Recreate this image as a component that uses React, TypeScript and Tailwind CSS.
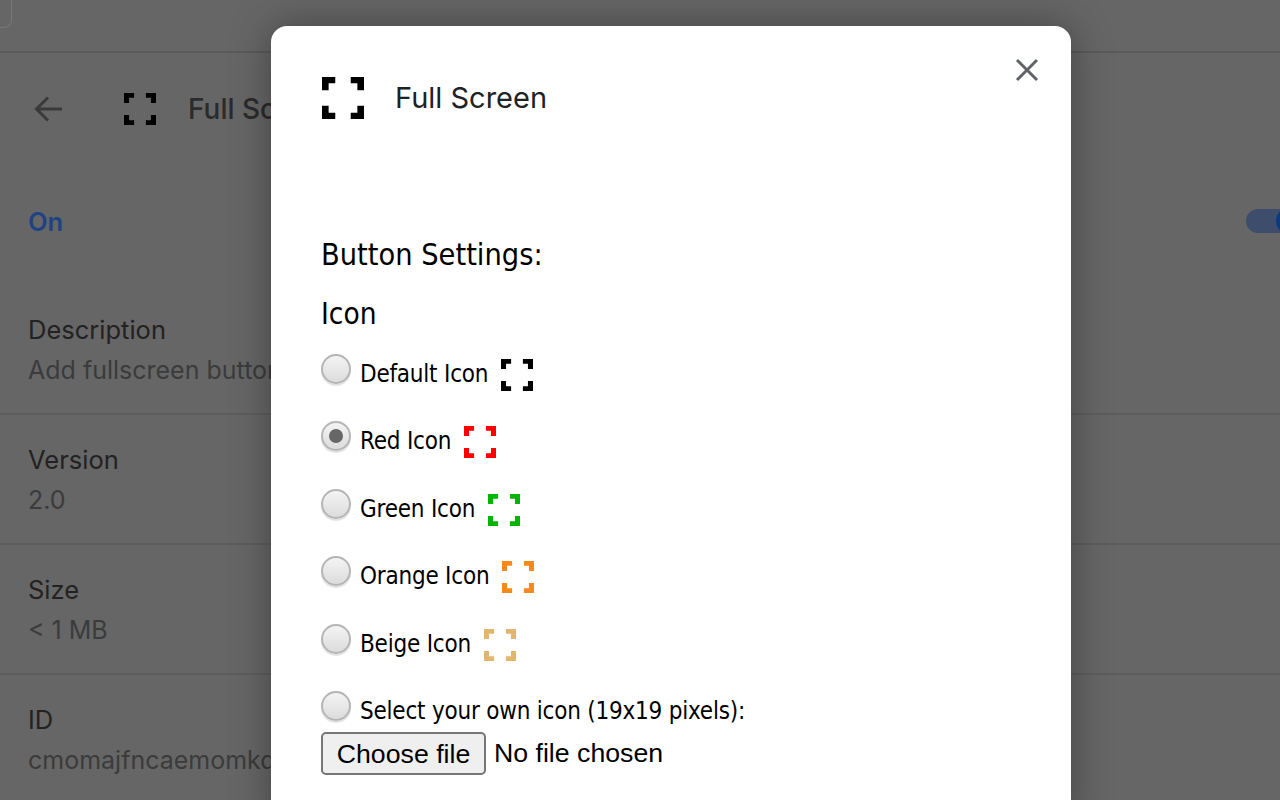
const sans = "font-['Inter',sans-serif]";
const body = "font-['DejaVu_Sans',sans-serif] [font-stretch:condensed]";

function FullScreenIcon({ color, className }: { color: string; className: string }) {
  return (
    <svg viewBox="0 0 19 19" className={`blur-[0.6px] ${className}`} fill={color}>
      <path d="M0 0h6v2.800H3V6H0z" />
      <path d="M13 0h6v6h-3V2.800h-3z" />
      <path d="M0 13h3v3.200h3V19H0z" />
      <path d="M16 13h3v6h-6v-2.800h3z" />
    </svg>
  );
}

const details = [
  { label: "Description", value: "Add fullscreen button to the toolbar" },
  { label: "Version", value: "2.0" },
  { label: "Size", value: "< 1 MB" },
  { label: "ID", value: "cmomajfncaemomkddkoihkgkcfmkfiof" },
];

const icons = [
  { label: "Default Icon", color: "#000000" },
  { label: "Red Icon", color: "#ff0000", checked: true },
  { label: "Green Icon", color: "#00b400" },
  { label: "Orange Icon", color: "#f7881a" },
  { label: "Beige Icon", color: "#e3b56e" },
];

function Radio({ checked }: { checked?: boolean }) {
  return (
    <span className="mt-1 flex size-[30px] shrink-0 items-center justify-center rounded-full border-2 border-[#b5b5b5] bg-gradient-to-b from-[#f4f4f4] to-[#dcdcdc] shadow-[0_2px_1px_rgba(0,0,0,0.12)]">
      {checked && <span className="size-[14px] rounded-full bg-[#666666]" />}
    </span>
  );
}

export default function App() {
  return (
    <div className={`relative h-[800px] w-[1280px] overflow-hidden bg-[#666666] ${sans}`}>
      <div className="h-[53px] border-b-2 border-[#5a5a5a]">
        <div className="-ml-4 h-[28px] w-[28px] rounded-b-lg border-r border-b border-[#777777]" />
      </div>

      <div className="flex h-[112px] items-center pl-[34px]">
        <svg viewBox="0 0 28 26" className="h-[26px] w-[28px]" fill="none" stroke="#3a3a3a" strokeWidth="3">
          <path d="M28 13H3M14 1.500 2.500 13 14 24.500" />
        </svg>
        <FullScreenIcon color="#000000" className="ml-[62px] size-[32px]" />
        <span className="ml-[32px] text-[28px] font-medium text-[#2b2b2b]">Full Screen</span>
      </div>

      <div className="flex h-[120px] items-center justify-between pb-[6px] pl-[28px]">
        <span className="text-[25.5px] font-semibold text-[#1d4384]">On</span>
        <span className="mb-[2px] -mr-[22px] flex h-[24px] w-[56px] items-center justify-end rounded-full bg-[#3d4d6b]">
          <span className="size-[26px] rounded-full bg-[#0b3a80]" />
        </span>
      </div>

      {details.map((row, i) => (
        <div key={row.label} className={`h-[130px] pl-[28px] pt-[25px] text-[25px] leading-[40px] ${i < 3 ? "border-b-2 border-[#5d5d5d]" : ""}`}>
          <div className="text-[25.5px] text-[#222222]">{row.label}</div>
          <div className="text-[#3b3b3b]">{row.value}</div>
        </div>
      ))}

      <div className="absolute top-[26px] left-[271px] h-[800px] w-[800px] rounded-t-2xl bg-white pl-[50px] shadow-[0_0_40px_rgba(0,0,0,0.35)]">
        <svg viewBox="0 0 24 24" className="absolute top-[32px] right-[32px] size-[24px]" fill="none" stroke="#5f6368" strokeWidth="3">
          <path d="M2 2l20 20M22 2 2 22" />
        </svg>

        <div className="flex items-center pt-[50px]">
          <FullScreenIcon color="#000000" className="ml-px size-[42px]" />
          <span className="ml-[31px] text-[29px] text-[#202124]">Full Screen</span>
        </div>

        <div className={`mt-[113px] text-[30.4px] leading-[44px] text-black ${body}`}>Button Settings:</div>
        <div className={`mt-[17px] text-[29.5px] leading-[40px] text-black ${body}`}>Icon</div>

        <div className={`mt-[16px] text-[24px] tracking-[-0.22px] text-black ${body}`}>
          {icons.map((icon) => (
            <div key={icon.label} className="flex h-[67.5px] items-start">
              <Radio checked={icon.checked} />
              <span className="mt-[6px] ml-[9px] leading-[36px]">{icon.label}</span>
              <FullScreenIcon color={icon.color} className="mt-[9px] ml-[13px] size-[32px]" />
            </div>
          ))}
          <div className="flex items-start">
            <Radio />
            <span className="mt-[6px] ml-[9px] leading-[36px]">Select your own icon (19x19 pixels):</span>
          </div>
        </div>

        <div className="mt-[3px] flex items-center font-['Liberation_Sans',sans-serif] text-[26.7px] text-black">
          <button className="h-[43px] w-[165px] rounded-[5px] border-2 border-[#767676] bg-[#efefef]">Choose file</button>
          <span className="ml-[8px]">No file chosen</span>
        </div>
      </div>
    </div>
  );
}
